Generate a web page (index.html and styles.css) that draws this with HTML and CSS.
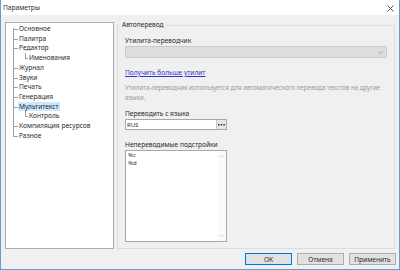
FILE: index.html
```html
<!DOCTYPE html>
<html lang="ru">
<head>
<meta charset="UTF-8" />
<title>Параметры</title>
<link rel="stylesheet" href="styles.css">
</head>
<body>
<div class="window">
  <div class="titlebar">
    <span class="title">Параметры</span>
    <svg class="close" width="7" height="7" viewBox="0 0 7 7"><path d="M0.5 0.5 L6.5 6.5 M6.5 0.5 L0.5 6.5" stroke="#444" stroke-width="0.9" fill="none"/></svg>
  </div>

  <div class="main">
    <div class="tree">
      <ul>
        <li>Основное</li>
        <li>Палитра</li>
        <li>Редактор
          <ul><li>Именования</li></ul>
        </li>
        <li>Журнал</li>
        <li>Звуки</li>
        <li>Печать</li>
        <li>Генерация</li>
        <li><span class="selected">Мультитекст</span>
          <ul><li>Контроль</li></ul>
        </li>
        <li>Компиляция ресурсов</li>
        <li>Разное</li>
      </ul>
    </div>

    <fieldset class="group">
      <legend>Автоперевод</legend>
      <div class="group-body">
        <div class="label first">Утилита-переводчик</div>
        <div class="select">
          <svg width="5" height="3" viewBox="0 0 5 3"><path d="M0.5 0.5 L2.5 2.5 L4.5 0.5" stroke="#8a8a8a" stroke-width="0.8" fill="none"/></svg>
        </div>
        <a class="link" href="#">Получить больше утилит</a>
        <p class="desc">Утилита-переводчик используется для автоматического перевода текстов на другие языки.</p>
        <div class="label">Переводить с языка</div>
        <div class="input">
          <span class="value">RUS</span>
          <span class="dots">
            <svg width="7" height="2" viewBox="0 0 7 2"><rect x="0" y="0" width="1.5" height="1.5" fill="#333"/><rect x="2.7" y="0" width="1.5" height="1.5" fill="#333"/><rect x="5.4" y="0" width="1.5" height="1.5" fill="#333"/></svg>
          </span>
        </div>
        <div class="label gap">Непереводимые подстройки</div>
        <div class="memo">
          <div class="lines">%c<br>%d</div>
          <div class="scroll">
            <svg width="5" height="3" viewBox="0 0 5 3"><path d="M0.5 2.5 L2.5 0.5 L4.5 2.5" stroke="#c4c4c4" stroke-width="0.8" fill="none"/></svg>
            <svg width="5" height="3" viewBox="0 0 5 3"><path d="M0.5 0.5 L2.5 2.5 L4.5 0.5" stroke="#c4c4c4" stroke-width="0.8" fill="none"/></svg>
          </div>
        </div>
      </div>
    </fieldset>
  </div>

  <div class="footer">
    <button class="btn default">OK</button>
    <button class="btn">Отмена</button>
    <button class="btn">Применить</button>
  </div>
</div>
</body>
</html>
```

FILE: styles.css
```css
body { margin: 0; }
.window {
  width: 400px; height: 270px; box-sizing: border-box;
  border: 1px solid #5a9fd8; border-top: none;
  background: #f0f0f0;
  display: flex; flex-direction: column;
  font: 6.6px "Noto Sans", "Liberation Sans", sans-serif; color: #2a2a2a;
}
.titlebar {
  height: 14px; background: #fff;
  display: flex; align-items: center; justify-content: space-between;
  padding: 1px 5px 0 2px;
}
.title { line-height: 14px; }

.main { display: flex; gap: 3px; padding: 5px 4px 0 4px; height: 229px; }
.tree {
  width: 107px; margin-top: 2px; background: #fff; border: 1px solid #adadad;
  padding-top: 1px;
}
.tree ul { list-style: none; margin: 0; padding: 0; }
.tree > ul { margin-left: 7px; }
.tree li { position: relative; padding-left: 6px; line-height: 9.7px; white-space: nowrap; }
.tree li::before {
  content: ""; position: absolute; left: 0; top: 0; width: 4px; height: 5px;
  border-left: 1px solid #a0a0a0; border-bottom: 1px solid #a0a0a0;
}
.tree li::after {
  content: ""; position: absolute; left: 0; top: 5px; bottom: 0;
  border-left: 1px solid #a0a0a0;
}
.tree > ul > li:first-child::before { top: 4px; height: 1px; }
.tree li:last-child::after { display: none; }
.tree li ul { margin-left: 0; }
.tree li li { padding-left: 4px; margin-left: 6px; }
.tree li li::before { width: 2px; }
.selected { background: #cce8ff; margin-left: -1px; padding: 0 1px; }

.group {
  flex: 1; min-width: 0; margin: 0; padding: 0;
  border: 1px solid #dcdcdc;
}
.group legend { margin-left: 2px; padding: 0 2px; line-height: 10px; }
.group-body { padding: 0 7px 0 7px; display: flex; flex-direction: column; align-items: flex-start; }
.label { line-height: 10px; margin-top: 6px; }
.label.gap { margin-top: 10px; }
.select {
  align-self: stretch; height: 10px; background: #dedede; border: 1px solid #cacaca;
  display: flex; align-items: center; justify-content: flex-end; padding-right: 3px;
}
.link { margin-top: 10px; line-height: 10px; color: #3333cc; }
.desc {
  margin: 5px -6px 0 0; line-height: 10px; color: #9a9a9a;
  font-size: 6.3px; letter-spacing: -0.05px;
}
.input {
  width: 100px; height: 9px; background: #fff; border: 1px solid #a8a8a8;
  display: flex; align-items: center; justify-content: space-between;
}
.input .value { padding-left: 1px; font-size: 6px; }
.dots {
  width: 9px; height: 9px; background: #e6e6e6; border-left: 1px solid #c8c8c8;
  display: flex; align-items: center; justify-content: center;
}
.memo {
  width: 100px; height: 90px; background: #fff; border: 1px solid #a8a8a8;
  display: flex; justify-content: space-between;
}
.lines { padding: 1px 0 0 2px; line-height: 7.5px; font-size: 6px; }
.scroll {
  width: 9px; display: flex; flex-direction: column; justify-content: space-between;
  align-items: center; padding: 4px 0 4px; background: #fafafa;
}

.footer { display: flex; justify-content: flex-end; gap: 5px; padding: 4px 3px 0 0; }
.btn {
  width: 47px; height: 12px; padding: 0; margin: 0;
  background: #e1e1e1; border: 1px solid #adadad;
  font: 6.6px "Noto Sans", "Liberation Sans", sans-serif; color: #2a2a2a;
}
.btn.default { border-color: #0078d7; }
```
